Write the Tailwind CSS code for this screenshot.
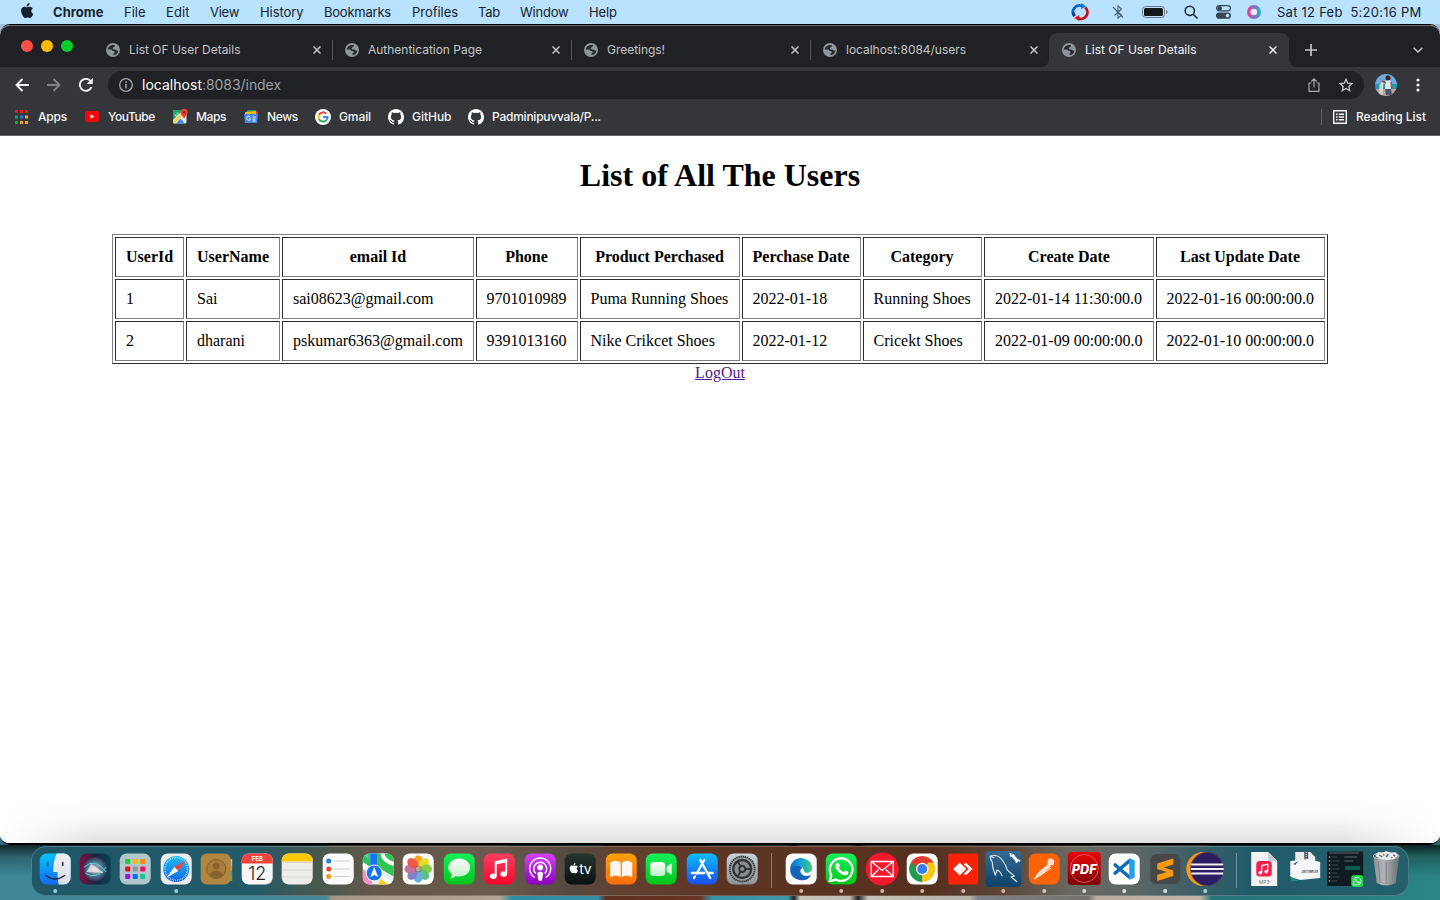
<!DOCTYPE html>
<html lang="en">
<head>
<meta charset="utf-8">
<title>List OF User Details</title>
<script src="https://cdn.jsdelivr.net/npm/@tailwindcss/browser@4"></script>
</head>
<body class="w-[1440px] h-[900px] overflow-hidden relative font-['Inter',sans-serif] bg-[linear-gradient(90deg,#3d8799_0,#46889a_326px,#a39784_332px,#b3a58f_500px,#2f8ea3_512px,#338fa3_598px,#5c2f20_606px,#6a3423_700px,#3493a5_712px,#3f98a6_788px,#222_794px,#c9c5bb_800px,#bdb9b0_850px,#222_858px,#c5c0b5_868px,#b5b0a8_970px,#7e8288_978px,#75716b_1088px,#b8aa9c_1096px,#c3b3a3_1200px,#257477_1212px,#2b8584_1440px)]">
<svg class="absolute w-0 h-0">
  <defs>
    <symbol id="globe" viewBox="0 0 14 14"><circle cx="7" cy="7" r="7" fill="#8e959c"/><path d="M5.600 2.300C3.500 2.900 2 4.500 1.700 6.600h3.100c.9 0 1.400.6 1.400 1.400h1.300c.7 0 1.200.5 1.200 1.200 0 .6-.5 1-1.200 1v1.900c2.700-.2 4.700-2.200 4.900-4.700-.8.400-1.700.3-2.300-.3-.5-.5-1-.6-1.700-.6-.9 0-1.600-.5-1.600-1.300 0-.7.600-1.100 1.300-1.200.5-.1.700-.4.700-.9 0-.4.100-.7.300-1-1.200-.3-2.400-.2-3.500.2z" fill="#26282b"/></symbol>
    <symbol id="close" viewBox="0 0 8 8"><path d="M.5.5l7 7M7.500.5l-7 7" stroke="currentColor" stroke-width="1.500" fill="none"/></symbol>
    <symbol id="github" viewBox="0 0 16 16"><path fill="#fff" d="M8 0C3.580 0 0 3.580 0 8c0 3.540 2.290 6.530 5.470 7.590.4.070.55-.17.55-.38 0-.19-.01-.82-.01-1.490-2.010.37-2.530-.49-2.690-.94-.09-.23-.48-.94-.82-1.130-.28-.15-.68-.52-.01-.53.63-.01 1.080.58 1.230.82.72 1.210 1.870.87 2.330.66.070-.52.28-.87.51-1.070-1.780-.2-3.640-.89-3.640-3.950 0-.87.31-1.590.82-2.150-.08-.2-.36-1.020.08-2.120 0 0 .67-.21 2.200.82a7.600 7.600 0 0 1 4 0c1.530-1.040 2.200-.82 2.200-.82.44 1.100.16 1.920.08 2.120.51.56.82 1.270.82 2.150 0 3.070-1.870 3.750-3.650 3.950.29.25.54.73.54 1.480 0 1.070-.01 1.930-.01 2.200 0 .21.15.46.55.38A8 8 0 0 0 16 8c0-4.420-3.580-8-8-8z"/></symbol>
    <symbol id="apple" viewBox="0 0 14 17"><path d="M9.700 0c.1 1.100-.3 2-.9 2.700-.6.700-1.500 1.200-2.300 1.100-.1-1 .3-2 .9-2.600C8 .5 8.900.1 9.700 0zM13.300 5.800c-1 .6-1.700 1.500-1.700 2.800 0 1.500.9 2.600 2.100 3.100-.3.900-.7 1.700-1.300 2.500-.6.900-1.200 1.800-2.200 1.800s-1.300-.6-2.500-.6-1.600.6-2.500.6c-1 0-1.700-1-2.300-1.900C1.200 11.700.3 8.900.8 6.800 1.300 5 2.700 4 4.200 4c1 0 2 .7 2.700.7.600 0 1.800-.8 3.100-.7 1.300.1 2.500.6 3.300 1.800z" fill="currentColor"/></symbol>
    <symbol id="wa" viewBox="-10 -10 20 20"><path d="M-9 9.500l1.400-4.600A8.700 8.700 0 1 1-4.300 8.100z" fill="none" stroke="#fff" stroke-width="1.800" stroke-linejoin="round"/><path d="M-3.400-4.500c.8-.7 1.400-.4 1.700.3l.7 1.600c.2.600-.9 1.300-.7 1.700.8 1.600 1.900 2.600 3.500 3.200.5.100 1-1.300 1.600-1.200l2 1c.7.500-.3 2.400-1.500 2.700C.6 5.600-4.500.7-4.700-2.100c0-1 .7-1.900 1.300-2.400z" fill="#fff"/></symbol>
    <linearGradient id="gFinder" x2="0" y2="1"><stop stop-color="#08c4fb"/><stop offset="1" stop-color="#1768f5"/></linearGradient>
    <linearGradient id="gWhite" x2="0" y2="1"><stop stop-color="#f0f1f4"/><stop offset="1" stop-color="#d8dde8"/></linearGradient>
    <linearGradient id="gSiri"><stop stop-color="#7d1140"/><stop offset=".5" stop-color="#1d2344"/><stop offset="1" stop-color="#064451"/></linearGradient>
    <radialGradient id="gOrb"><stop stop-color="#fff"/><stop offset=".35" stop-color="#b3b7d2"/><stop offset=".7" stop-color="#42899a"/><stop offset="1" stop-color="#4b315e"/></radialGradient>
    <linearGradient id="gSafari" x2="0" y2="1"><stop stop-color="#17bdf9"/><stop offset="1" stop-color="#1766e8"/></linearGradient>
    <linearGradient id="gMsg" x2="0" y2="1"><stop stop-color="#12f25a"/><stop offset="1" stop-color="#04c41b"/></linearGradient>
    <linearGradient id="gBubble" x2="0" y2="1"><stop stop-color="#fbfdfb"/><stop offset="1" stop-color="#c4edc9"/></linearGradient>
    <linearGradient id="gMusic" x2="0" y2="1"><stop stop-color="#fd3e63"/><stop offset="1" stop-color="#f6062a"/></linearGradient>
    <linearGradient id="gPod" x2="0" y2="1"><stop stop-color="#d442f8"/><stop offset="1" stop-color="#8a02be"/></linearGradient>
    <linearGradient id="gTv" x2="0" y2="1"><stop stop-color="#24352f"/><stop offset="1" stop-color="#0a1012"/></linearGradient>
    <linearGradient id="gBook" x2="0" y2="1"><stop stop-color="#ffa007"/><stop offset="1" stop-color="#fd6f08"/></linearGradient>
    <linearGradient id="gStore" x2="0" y2="1"><stop stop-color="#08bdfb"/><stop offset="1" stop-color="#1a4ef0"/></linearGradient>
    <linearGradient id="gSet" x2="0" y2="1"><stop stop-color="#c8d3da"/><stop offset="1" stop-color="#8e9396"/></linearGradient>
    <linearGradient id="gSql" x2="0" y2="1"><stop stop-color="#356b93"/><stop offset="1" stop-color="#0d4168"/></linearGradient>
    <linearGradient id="gPdf" x2="0" y2="1"><stop stop-color="#e8060c"/><stop offset="1" stop-color="#7c0407"/></linearGradient>
    <linearGradient id="gTrash"><stop stop-color="#8b8f91"/><stop offset=".4" stop-color="#b2b5b6"/><stop offset="1" stop-color="#6a6f72"/></linearGradient>
    <linearGradient id="gEdge"><stop stop-color="#0d69c0"/><stop offset=".5" stop-color="#14a5d9"/><stop offset="1" stop-color="#43ce6a"/></linearGradient>
    <linearGradient id="gCtl"><stop stop-color="#f43c86"/><stop offset=".5" stop-color="#8c6ad0"/><stop offset="1" stop-color="#18bfc4"/></linearGradient>
  </defs>
</svg>

<div class="flex flex-col h-[900px]">
  <!-- Menu bar -->
  <header class="h-6 shrink-0 flex items-center bg-[#b8e2ff] text-[#14222c] text-[13px] leading-6 whitespace-nowrap">
    <svg class="w-[14px] h-[16px] ml-[20px] mr-[19px] shrink-0 -mt-[2px]"><use href="#apple"/></svg>
    <div class="w-[71px] font-bold"><span data-w="50.500">Chrome</span></div>
    <div class="w-[42px]"><span data-w="21.500">File</span></div>
    <div class="w-[44px]"><span data-w="23.500">Edit</span></div>
    <div class="w-[50px]"><span data-w="29">View</span></div>
    <div class="w-[64px]"><span data-w="43.500">History</span></div>
    <div class="w-[88px]"><span data-w="67">Bookmarks</span></div>
    <div class="w-[66px]"><span data-w="46">Profiles</span></div>
    <div class="w-[42px]"><span data-w="22">Tab</span></div>
    <div class="w-[69px]"><span data-w="48.500">Window</span></div>
    <div class="flex-1"><span data-w="28">Help</span></div>
    <svg class="w-[18px] h-[18px] mr-[23px]" viewBox="0 0 18 18" fill="none" stroke-width="2.800"><path d="M3.200 13A6.600 6.600 0 0 1 11 3" stroke="#0b63c4"/><path d="M2.500 9.500A6.600 6.600 0 0 0 3.600 13.300" stroke="#173a75"/><path d="M10.500 0l4.500 3.400-5 2.600z" fill="#0b72d8"/><path d="M14.300 4.500A6.600 6.600 0 0 1 7 15.300" stroke="#c61218"/><path d="M8.300 12l-5 3 5 3z" fill="#e80b12"/></svg>
    <svg class="w-[12px] h-[14px] mr-[18px]" viewBox="0 0 12 14" fill="none" stroke="#4b6272" stroke-width="1.100"><path d="M2.500 10.500L9.500 4 6 .8v12.400L9.500 10 6.500 7.300M1 2l10 10.500"/></svg>
    <svg class="w-[26px] h-[12px] mr-[16px]" viewBox="0 0 26 12"><rect x=".5" y=".5" width="22" height="11" rx="3" fill="none" stroke="#627a8a"/><rect x="2" y="2" width="19" height="8" rx="1.500" fill="#14181b"/><path d="M24 4c2 .5 2 3.500 0 4z" fill="#627a8a"/></svg>
    <svg class="w-[14px] h-[14px] mr-[18px]" viewBox="0 0 14 14" fill="none" stroke="#15222b" stroke-width="1.500"><circle cx="5.800" cy="5.800" r="4.600"/><path d="M9 9l4.500 4.500"/></svg>
    <svg class="w-[15px] h-[14px] mr-[16px]" viewBox="0 0 15 14"><rect x=".6" y=".6" width="13.800" height="5.200" rx="2.600" fill="none" stroke="#36454f" stroke-width="1.200"/><circle cx="3.700" cy="3.200" r="2.300" fill="#36454f"/><rect y="7.500" width="15" height="6.300" rx="3.100" fill="#36454f"/><circle cx="11.500" cy="10.600" r="1.800" fill="#b8e2ff"/></svg>
    <svg class="w-[14px] h-[14px] mr-[16px]" viewBox="0 0 14 14"><circle cx="7" cy="7" r="7" fill="url(#gCtl)"/><circle cx="6.800" cy="7" r="3.300" fill="#fff" opacity=".85"/></svg>
    <div class="w-[163px] whitespace-pre"><span data-w="144.500">Sat 12 Feb  5:20:16 PM</span></div>
  </header>

  <!-- Browser window -->
  <div class="shrink-0 bg-[linear-gradient(180deg,#9fc4dc_0,#9fc4dc_12px,#0000_12px,#0000_780px,#0003_100%)]">
  <main class="h-[821px] flex flex-col bg-white border-t border-b-2 border-black rounded-[10px] overflow-hidden">
    <div class="h-[42px] shrink-0 flex bg-[#202124] border-t border-[#66686b] rounded-t-[10px] text-[12px] text-[#c3c6ca] whitespace-nowrap">
      <div class="w-[94px] flex gap-2 pl-[21px] pt-[14px]">
        <span class="w-3 h-3 rounded-full bg-[#ff4f48]"></span><span class="w-3 h-3 rounded-full bg-[#febb00]"></span><span class="w-3 h-3 rounded-full bg-[#05ce2c]"></span>
      </div>
      <div class="w-[239px] h-[34px] mt-[7px] flex items-center pl-3"><svg class="w-[14px] h-[14px] mr-[9px]"><use href="#globe"/></svg><span class="flex-1"><span data-w="111.500">List OF User Details</span></span><svg class="w-2 h-2 mr-[11px]"><use href="#close"/></svg><i class="w-px h-5 bg-[#54565a]"></i></div>
      <div class="w-[239px] h-[34px] mt-[7px] flex items-center pl-3"><svg class="w-[14px] h-[14px] mr-[9px]"><use href="#globe"/></svg><span class="flex-1"><span data-w="114">Authentication Page</span></span><svg class="w-2 h-2 mr-[11px]"><use href="#close"/></svg><i class="w-px h-5 bg-[#54565a]"></i></div>
      <div class="w-[239px] h-[34px] mt-[7px] flex items-center pl-3"><svg class="w-[14px] h-[14px] mr-[9px]"><use href="#globe"/></svg><span class="flex-1"><span data-w="58">Greetings!</span></span><svg class="w-2 h-2 mr-[11px]"><use href="#close"/></svg><i class="w-px h-5 bg-[#54565a]"></i></div>
      <div class="w-[230px] h-[34px] mt-[7px] flex items-center pl-3"><svg class="w-[14px] h-[14px] mr-[9px]"><use href="#globe"/></svg><span class="flex-1"><span data-w="120">localhost:8084/users</span></span><svg class="w-2 h-2 mr-[3px]"><use href="#close"/></svg></div>
      <svg class="w-2 h-[34px] mt-[7px]" viewBox="0 0 8 34"><path d="M8 26v8H0a8 8 0 0 0 8-8z" fill="#35363a"/></svg>
      <div class="w-[240px] h-[34px] mt-[7px] flex items-center pl-[13px] bg-[#35363a] text-[#f1f3f4] rounded-t-lg"><svg class="w-[14px] h-[14px] mr-[9px]"><use href="#globe"/></svg><span class="flex-1"><span data-w="111.500">List OF User Details</span></span><svg class="w-2 h-2 mr-[12px]"><use href="#close"/></svg></div>
      <svg class="w-2 h-[34px] mt-[7px]" viewBox="0 0 8 34"><path d="M0 26v8h8a8 8 0 0 1-8-8z" fill="#35363a"/></svg>
      <svg class="w-3 h-3 mt-[18px] ml-2" viewBox="0 0 12 12"><path d="M6 0v12M0 6h12" stroke="#c3c6ca" stroke-width="1.700"/></svg>
      <svg class="w-[10px] h-[6px] mt-[21px] ml-auto mr-[17px]" viewBox="0 0 10 6"><path d="M.7.7L5 5 9.300.7" fill="none" stroke="#c3c6ca" stroke-width="1.500"/></svg>
    </div>
    <!-- Address bar -->
    <div class="h-[36px] shrink-0 flex items-center bg-[#35363a]">
      <svg class="w-[14px] h-[14px] ml-[15px] mr-[18px]" viewBox="0 0 14 14" fill="none" stroke="#f1f3f4" stroke-width="1.900"><path d="M14 7H1.500M7.500 1L1.500 7l6 6"/></svg>
      <svg class="w-[14px] h-[14px] mr-[18px]" viewBox="0 0 14 14" fill="none" stroke="#808286" stroke-width="1.800"><path d="M0 7h12.500M6.500 1l6 6-6 6"/></svg>
      <svg class="w-[14px] h-[14px] mr-[15px]" viewBox="0 0 14 14"><path d="M12.500 9A6 6 0 1 1 11.500 3" fill="none" stroke="#f1f3f4" stroke-width="1.900"/><path d="M13.800 0v6H7.800z" fill="#f1f3f4"/></svg>
      <div class="w-[1256px] h-7 rounded-full bg-[#202124] flex items-center text-[14px] text-[#9aa0a6]">
        <svg class="w-[14px] h-[14px] ml-[11px] mr-[9px]" viewBox="0 0 14 14"><circle cx="7" cy="7" r="6.300" fill="none" stroke="#a4a8ad" stroke-width="1.300"/><path d="M7 6v4.500M7 3.300v1.500" stroke="#a4a8ad" stroke-width="1.500"/></svg>
        <span class="flex-1 pb-px leading-[18px]"><span class="text-white" data-w="60">localhost</span><span data-w="79">:8083/index</span></span>
        <svg class="w-[12px] h-[14px] mr-[19px]" viewBox="0 0 12 14" fill="none" stroke="#a4a8ad" stroke-width="1.200"><path d="M3.500 5H1v8.300h10V5H8.500M6 9.500V1M3.300 3.500L6 .9l2.700 2.600"/></svg>
        <svg class="w-[14px] h-[14px] mr-[11px]" viewBox="0 0 14 14" fill="none" stroke="#c3c6ca" stroke-width="1.300"><path d="M7 1.300l1.700 3.900 4.300.4-3.200 2.900.9 4.200L7 10.500l-3.700 2.200.9-4.200L1 5.600l4.300-.4z"/></svg>
      </div>
      <svg class="w-[22px] h-[22px] ml-[11px]" viewBox="0 0 22 22"><clipPath id="av"><circle cx="11" cy="11" r="11"/></clipPath><g clip-path="url(#av)"><path fill="#70a9e0" d="M0 0h22v11H0z"/><path fill="#1e9ab4" d="M0 10h22v6H0z"/><path fill="#b1a79a" d="M0 15h22v7H0z"/><path d="M4 22L4.500 11l3-4 1 2-1 12z" fill="#d6d2cc"/><path d="M10 8l2-2h3l2 4-1 6h-6z" fill="#e2e5ea"/><circle cx="13" cy="4" r="2.500" fill="#39241f"/><path d="M7 7l4 2M16 8l1 7" stroke="#8a5a43" stroke-width="1.600"/><path d="M10 15h6l1 6h-6z" fill="#4c5170"/></g></svg>
      <svg class="w-[4px] h-[14px] ml-[19px]" viewBox="0 0 4 14" fill="#f1f3f4"><circle cx="2" cy="2" r="1.600"/><circle cx="2" cy="7" r="1.600"/><circle cx="2" cy="12" r="1.600"/></svg>
    </div>
    <!-- Bookmarks -->
    <div class="h-[33px] pb-[5px] shrink-0 flex items-center bg-[#35363a] border-b border-[#626366] text-[12px] text-[#f5f6f7] whitespace-nowrap font-medium">
      <svg class="w-[13px] h-[14px] ml-[15px] mr-[10px]" viewBox="0 0 13 14"><path fill="#ea1c1c" d="M0 0h3v3H0zM5 0h3v3H5zM10 0h3v3h-3z"/><path fill="#18a34a" d="M0 5.500h3v3H0zM0 11h3v3H0z"/><path fill="#1c7be8" d="M5 5.500h3v3H5z"/><path fill="#f7a81b" d="M10 5.500h3v3h-3zM5 11h3v3H5zM10 11h3v3h-3z"/></svg>
      <div class="w-[47px]"><span data-w="29">Apps</span></div>
      <svg class="w-[14px] h-[11px] mr-[9px]" viewBox="0 0 14 11"><rect width="14" height="11" rx="2.500" fill="#f00"/><path d="M5.500 3.200v4.600l4-2.300z" fill="#fff"/></svg>
      <div class="w-[65px]"><span data-w="47">YouTube</span></div>
      <svg class="w-[15px] h-[15px] mr-[8px]" viewBox="0 0 15 15"><rect y="1" width="13.500" height="13.500" rx="1.500" fill="#e8eaed"/><path fill="#1da462" d="M1 1h9L0 11V2z"/><path fill="#fbd04b" d="M0 12l9-9 2 2-9 9.500H1z"/><path d="M3 14.500L7.500 9.600l4.500 4.900z" fill="#4285f4"/><path d="M7.500 3.500a3.600 3.600 0 0 1 7.200 0c0 2.500-2.700 3.300-3.600 6.500-.9-3.200-3.600-4-3.600-6.500z" fill="#ea4335"/><circle cx="11.100" cy="3.500" r="1.300" fill="#8c1b12"/><path d="M2 5.500a1.600 1.600 0 1 0 1.600-1.600" stroke="#fff" stroke-width=".9" fill="none"/></svg>
      <div class="w-[48px]"><span data-w="30">Maps</span></div>
      <svg class="w-[15px] h-[13px] mr-[8px]" viewBox="0 0 15 13"><path fill="#1a9b55" d="M3 0h9v4H3z"/><path fill="#ea4335" d="M10 1l4 1-1 3h-3z"/><path fill="#fbbc04" d="M1 2l11-1v4H1z"/><path fill="#4285f4" d="M0 4h14l-1 9H1z"/><path d="M6.300 7.200A2 2 0 1 0 6.500 9H5M8.500 7h3M8.500 9h3M8.500 11h3" fill="none" stroke="#fff" stroke-width="1"/></svg>
      <div class="w-[48px]"><span data-w="31">News</span></div>
      <svg class="w-4 h-4 mr-[8px]" viewBox="0 0 16 16" fill="none" stroke-width="2"><circle cx="8" cy="8" r="8" fill="#fff"/><path d="M11.300 4.700A4.600 4.600 0 0 0 4 5.800" stroke="#ea4335"/><path d="M4 5.700a4.600 4.600 0 0 0 0 4.600" stroke="#fbbc04"/><path d="M4 10.300a4.600 4.600 0 0 0 7 1.100" stroke="#34a853"/><path d="M11 11.400A4.600 4.600 0 0 0 12.600 8H8" stroke="#4285f4"/></svg>
      <div class="w-[49px]"><span data-w="32">Gmail</span></div>
      <svg class="w-4 h-4 mr-[8px]"><use href="#github"/></svg>
      <div class="w-[56px]"><span data-w="39.500">GitHub</span></div>
      <svg class="w-4 h-4 mr-[8px]"><use href="#github"/></svg>
      <div class="flex-1"><span data-w="109">Padminipuvvala/P...</span></div>
      <i class="w-px h-4 bg-[#5f6165] mr-[11px]"></i>
      <svg class="w-[14px] h-[14px] mr-[9px]" viewBox="0 0 14 14" fill="none" stroke="#f1f3f4" stroke-width="1.400"><path d="M.7.7h12.600v12.600H.7zM3 4.200h1.600M3 7h1.600M3 9.800h1.600M5.700 4.200H11M5.700 7H11M5.700 9.800H11"/></svg>
      <div class="w-[84px]"><span data-w="70">Reading List</span></div>
    </div>
    <!-- Page -->
    <section class="flex-1 flex flex-col items-center text-black text-[16px] font-['Liberation_Serif',serif] bg-[linear-gradient(90deg,#fff_0,#fff0_100px,#fff0_1340px,#fff_1440px),linear-gradient(180deg,#fff_0,#fff_660px,#f9f9f9_680px,#eee_694px,#e0e0e0_707px)]">
      <h1 class="text-[32px] leading-[37px] font-bold mt-[21px] mb-[40px]">List of All The Users</h1>
      <table class="w-[1216px] h-[130px] table-fixed border-separate border-spacing-[2px] border border-t-[#808080] border-l-[#808080] border-b-[#2c2c2c] border-r-[#2c2c2c] leading-[18px] whitespace-nowrap [&_:is(td,th)]:h-10 [&_:is(td,th)]:px-[10px] [&_:is(td,th)]:py-0 [&_:is(td,th)]:border [&_:is(td,th)]:border-t-[#2c2c2c] [&_:is(td,th)]:border-l-[#2c2c2c] [&_:is(td,th)]:border-b-[#808080] [&_:is(td,th)]:border-r-[#808080] [&_:is(td,th):nth-child(n+4):not(:nth-child(8))]:pl-[9.500px] [&_:is(td,th):nth-child(n+4):not(:nth-child(8))]:pr-[10.500px]">
        <colgroup><col class="w-[69px]"><col class="w-[94px]"><col class="w-[192px]"><col class="w-[102px]"><col class="w-[160px]"><col class="w-[119px]"><col class="w-[119px]"><col class="w-[170px]"><col class="w-[169px]"></colgroup>
        <tr><th>UserId</th><th>UserName</th><th>email Id</th><th>Phone</th><th>Product Perchased</th><th>Perchase Date</th><th>Category</th><th>Create Date</th><th>Last Update Date</th></tr>
        <tr><td>1</td><td>Sai</td><td>sai08623@gmail.com</td><td>9701010989</td><td>Puma Running Shoes</td><td>2022-01-18</td><td>Running Shoes</td><td>2022-01-14 11:30:00.0</td><td>2022-01-16 00:00:00.0</td></tr>
        <tr><td>2</td><td>dharani</td><td>pskumar6363@gmail.com</td><td>9391013160</td><td>Nike Crikcet Shoes</td><td>2022-01-12</td><td>Cricekt Shoes</td><td>2022-01-09 00:00:00.0</td><td>2022-01-10 00:00:00.0</td></tr>
      </table>
      <a class="text-[#551a8b] underline leading-[18px]">LogOut</a>
    </section>
  </main>
  </div>

  <!-- Desktop and dock -->
  <footer class="flex-1 px-[31px] pt-px bg-[linear-gradient(180deg,#000b_0,#0004_12px,#0000_32px)]">
    <div class="h-[50px] rounded-[15px] border border-white/20 flex items-start pl-[2.500px] bg-[linear-gradient(90deg,#1f5767_0,#225a68_220px,#48584f_285px,#625749_340px,#6a5b4c_460px,#54493f_540px,#63402f_590px,#5c3424_700px,#56301f_900px,#5b4536_970px,#6a6861_1040px,#5f6765_1100px,#3b5f67_1165px,#215a69_1220px,#24606c_1376px)] [&>svg]:w-[40.450px] [&>svg]:h-[48px] [&>svg]:shrink-0">
      <!-- Finder -->
      <svg viewBox="-20 -22 40 48"><rect x="-15.500" y="-15.500" width="31" height="31" rx="7" fill="url(#gFinder)"/><path d="M1.500-15.500h7a7 7 0 0 1 7 7V8.500a7 7 0 0 1-7 7H3.500Q2 9 2.300 3H-2Q-2-8 1.500-15.500z" fill="url(#gWhite)"/><path d="M-7.500-6.500v3M7.500-6.500v3M-9.500 6.500q9.500 7 19 0" stroke="#14233a" stroke-width="1.400" fill="none" stroke-linecap="round"/><circle cy="22" r="2" fill="#8ccfe3"/></svg>
      <!-- Siri -->
      <svg viewBox="-20 -22 40 48"><rect x="-15.500" y="-15.500" width="31" height="31" rx="7" fill="url(#gSiri)"/><circle r="12" fill="url(#gOrb)" opacity=".7"/><path d="M-11-2Q0-12 11 3M-10 4Q0 12 11-2" stroke="#51d8cf" fill="none"/><path d="M-4-5L9 4-9 3z" fill="#fff" opacity=".65"/></svg>
      <!-- Launchpad -->
      <svg viewBox="-20 -22 40 48"><rect x="-15.500" y="-15.500" width="31" height="31" rx="7" fill="#b2c6ce"/><g><rect x="-10" y="-10" width="5" height="5" rx="1" fill="#16cf3b"/><rect x="-2.500" y="-10" width="5" height="5" rx="1" fill="#f9b808"/><rect x="5" y="-10" width="5" height="5" rx="1" fill="#fb8b08"/><rect x="-10" y="-2.500" width="5" height="5" rx="1" fill="#e80b18"/><rect x="-2.500" y="-2.500" width="5" height="5" rx="1" fill="#8c9699"/><rect x="5" y="-2.500" width="5" height="5" rx="1" fill="#f90c58"/><rect x="-10" y="5" width="5" height="5" rx="1" fill="#9816d6"/><rect x="-2.500" y="5" width="5" height="5" rx="1" fill="#0b6cf4"/><rect x="5" y="5" width="5" height="5" rx="1" fill="#0bcc87"/></g></svg>
      <!-- Safari -->
      <svg viewBox="-20 -22 40 48"><rect x="-15.500" y="-15.500" width="31" height="31" rx="7" fill="#ecedef"/><circle r="13" fill="url(#gSafari)"/><circle r="11.300" fill="none" stroke="#fff" stroke-width="1.500" stroke-dasharray=".6 1.200"/><path d="M9.500-8.500L2 2-2-2z" fill="#f4433a"/><path d="M-9.500 8.500L-2-2 2 2z" fill="#fff"/><circle cy="22" r="2" fill="#8ccfe3"/></svg>
      <!-- Contacts -->
      <svg viewBox="-20 -22 40 48"><path d="M12-10h4v7h-4z" fill="#b7b8b5"/><path d="M12-3h4v5h-4z" fill="#eb9426"/><path d="M12 2h4v5h-4z" fill="#2ba1ae"/><path d="M12 7h4v5h-4z" fill="#54b63b"/><rect x="-15.500" y="-15.500" width="30" height="31" rx="6" fill="#b28640"/><circle r="9.500" fill="#a97d38" stroke="#83602a"/><circle cy="-3" r="3.300" fill="#86622e"/><path d="M-7 6Q-4 1.500 0 1.500T7 6Q0 12-7 6z" fill="#86622e"/></svg>
      <!-- Calendar -->
      <svg viewBox="-20 -22 40 48"><rect x="-15.500" y="-15.500" width="31" height="31" rx="7" fill="#f7f7f7"/><path d="M-15.500-5.500v-3a7 7 0 0 1 7-7h17a7 7 0 0 1 7 7v3z" fill="#f3443e"/><text y="-8" text-anchor="middle" font-size="6" font-weight="700" fill="#fff">FEB</text><text y="10.500" text-anchor="middle" font-size="19" font-weight="300" fill="#252525" textLength="18" lengthAdjust="spacingAndGlyphs">12</text></svg>
      <!-- Notes -->
      <svg viewBox="-20 -22 40 48"><rect x="-15.500" y="-15.500" width="31" height="31" rx="7" fill="#efedea"/><path d="M-15.500-7.500v-1a7 7 0 0 1 7-7h17a7 7 0 0 1 7 7v1z" fill="#fdc904"/><path d="M-15.500-6.500h31M-15.500 1h31M-15.500 8h31" stroke="#d2d0cc" stroke-width=".7"/></svg>
      <!-- Reminders -->
      <svg viewBox="-20 -22 40 48"><rect x="-15.500" y="-15.500" width="31" height="31" rx="7" fill="#fbfbfb"/><path d="M-4-8h16M-4 0h16M-4 7.500h16" stroke="#cfcfcf"/><circle cx="-9.500" cy="-8" r="2.500" fill="#2479ec"/><circle cx="-9.500" r="2.500" fill="#ec4438"/><circle cx="-9.500" cy="7.500" r="2.500" fill="#f49422"/></svg>
      <!-- Maps -->
      <svg viewBox="-20 -22 40 48"><clipPath id="mp"><rect x="-15.500" y="-15.500" width="31" height="31" rx="7"/></clipPath><g clip-path="url(#mp)"><path fill="#e9eef0" d="M-16-16h32v32h-32z"/><path fill="#2fc550" d="M-16-16h8V0l-8-5zM-1-16h17V8L-1-2z"/><path fill="#44cdf1" d="M-16-16h6v6z"/><path d="M-16-5L16 17M16-5Q4-8 4-18" stroke="#fff" stroke-width="4" fill="none"/><path fill="#f291c3" d="M-16 0l10 6v10h-10z"/><path fill="#fcce1b" d="M2 10l9 6H0z"/><path fill="#1475f4" d="M-8-16h7V0h-7z"/><circle cx="-4" cy="4" r="8" fill="#1475f4" stroke="#fff"/><path d="M-4-2L0 8l-4-2-4 2z" fill="#fff"/></g></svg>
      <!-- Photos -->
      <svg viewBox="-20 -22 40 48"><rect x="-15.500" y="-15.500" width="31" height="31" rx="7" fill="#fff"/><g opacity=".92"><ellipse cy="-8" rx="4.600" ry="5.800" fill="#fb9812"/><ellipse cy="-8" rx="4.600" ry="5.800" fill="#e6d81c" transform="rotate(45)"/><ellipse cy="-8" rx="4.600" ry="5.800" fill="#82c932" transform="rotate(90)"/><ellipse cy="-8" rx="4.600" ry="5.800" fill="#4dbb72" transform="rotate(135)"/><ellipse cy="-8" rx="4.600" ry="5.800" fill="#5ca8dc" transform="rotate(180)"/><ellipse cy="-8" rx="4.600" ry="5.800" fill="#7b78c6" transform="rotate(225)"/><ellipse cy="-8" rx="4.600" ry="5.800" fill="#c0669d" transform="rotate(270)"/><ellipse cy="-8" rx="4.600" ry="5.800" fill="#f0483c" transform="rotate(315)"/></g><circle r="3.500" fill="#6e5a3c" opacity=".5"/></svg>
      <!-- Messages -->
      <svg viewBox="-20 -22 40 48"><rect x="-15.500" y="-15.500" width="31" height="31" rx="7" fill="url(#gMsg)"/><path d="M0-10.500c6 0 11 4 11 9s-5 9-11 9q-2 0-3.500-.5Q-6 9.500-9 9.500q2-2 1.800-4.300Q-11 2.500-11-1.500c0-5 5-9 11-9z" fill="url(#gBubble)"/></svg>
      <!-- Music -->
      <svg viewBox="-20 -22 40 48"><rect x="-15.500" y="-15.500" width="31" height="31" rx="7" fill="url(#gMusic)"/><path d="M-3.500 7v-14L7-9.300V4.500M-3.500-5.500L7-7.800" stroke="#fff" stroke-width="2" fill="none"/><ellipse cx="-6" cy="7.300" rx="3.300" ry="2.700" fill="#fff"/><ellipse cx="4.500" cy="5" rx="3.300" ry="2.700" fill="#fff"/></svg>
      <!-- Podcasts -->
      <svg viewBox="-20 -22 40 48"><rect x="-15.500" y="-15.500" width="31" height="31" rx="7" fill="url(#gPod)"/><g fill="none" stroke="#fff" stroke-width="1.400"><path d="M-5.500 8.500a10.500 10.500 0 1 1 11 0M-4.500 4.500a6.500 6.500 0 1 1 9 0"/></g><circle cy="-1.500" r="2.900" fill="#fff"/><path d="M-3 4q3-2.500 6 0L1.800 11q-1.800 2-3.600 0z" fill="#fff"/></svg>
      <!-- TV -->
      <svg viewBox="-20 -22 40 48"><rect x="-15.500" y="-15.500" width="31" height="31" rx="7" fill="url(#gTv)"/><use href="#apple" x="-11" y="-6" width="9" height="11" color="#fff"/><text x="-1" y="4.700" font-size="14" fill="#fff" textLength="12.500">tv</text></svg>
      <!-- Books -->
      <svg viewBox="-20 -22 40 48"><rect x="-15.500" y="-15.500" width="31" height="31" rx="7" fill="url(#gBook)"/><path d="M-.6 8Q-5 5-11 8V-6.500Q-5-10-.6-6.500zM.6 8Q5 5 11 8V-6.500Q5-10 .6-6.500z" fill="#fcf7f1"/></svg>
      <!-- FaceTime -->
      <svg viewBox="-20 -22 40 48"><rect x="-15.500" y="-15.500" width="31" height="31" rx="7" fill="url(#gMsg)"/><rect x="-11" y="-7" width="15" height="14" rx="3.500" fill="url(#gBubble)"/><path d="M5.500-2.500L10.500-6V6L5.500 2.500z" fill="#e3f6e5"/></svg>
      <!-- App Store -->
      <svg viewBox="-20 -22 40 48"><rect x="-15.500" y="-15.500" width="31" height="31" rx="7" fill="url(#gStore)"/><path d="M2-9L-5.500 4.500M-2-9L8 9M-10.500 4H2M6.500 4H10.500M-7.300 7.500L-8.200 9" stroke="#fff" stroke-width="2.300" stroke-linecap="round"/></svg>
      <!-- Settings -->
      <svg viewBox="-20 -22 40 48"><rect x="-15.500" y="-15.500" width="31" height="31" rx="7" fill="url(#gSet)"/><circle r="12.500" fill="#9a9da0" stroke="#33373a" stroke-width="1.800" stroke-dasharray="1.500 .6"/><circle r="9" fill="#8a8e91" stroke="#303437" stroke-width="2.300"/><circle r="3" fill="none" stroke="#303437" stroke-width="1.800"/><path d="M3 0h6M-1.500-2.500L-5-8M-1.500 2.500L-5 8" stroke="#303437" stroke-width="1.800"/></svg>
      <div class="w-[18.500px] flex justify-center pt-[6px] shrink-0"><i class="w-px h-[35px] bg-white/35"></i></div>
      <!-- Edge -->
      <svg viewBox="-20 -22 40 48"><rect x="-15.500" y="-15.500" width="31" height="31" rx="7" fill="#fff"/><path d="M-11 1A11 11 0 0 1 11-1c0 4-3 5.500-7 4.500C2 3 3-1 0-2.500-4-4-8-3-11 1z" fill="url(#gEdge)"/><path d="M-11 1C-8-5 0-4 1-1-2 0-2 7 6 7c2 0 3.500-1 4-1C7 11 2 12-2 11-8 9.500-11 6-11 1z" fill="#1164b8"/><circle cy="22" r="2" fill="#d4b5a6"/></svg>
      <!-- WhatsApp -->
      <svg viewBox="-20 -22 40 48"><rect x="-15.500" y="-15.500" width="31" height="31" rx="7" fill="url(#gMsg)"/><use href="#wa" x="-13" y="-13" width="26" height="26"/><circle cy="22" r="2" fill="#d4b5a6"/></svg>
      <!-- Mail client -->
      <svg viewBox="-20 -22 40 48"><circle r="16.500" fill="#f9182b"/><path d="M-11-7.500h22v15h-22zM-11-7.500L0 1.500 11-7.500M-11 7.500l7.500-7M11 7.500l-7.500-7" fill="none" stroke="#fff" stroke-width="1.300"/><circle cy="22" r="2" fill="#d4b5a6"/></svg>
      <!-- Chrome -->
      <svg viewBox="-20 -22 40 48"><rect x="-15.500" y="-15.500" width="31" height="31" rx="7" fill="#fff"/><path d="M0 0L-11.260-6.500A13 13 0 0 1 11.260-6.500z" fill="#e33b2e"/><path d="M0 0L11.260-6.500A13 13 0 0 1 0 13z" fill="#fcc712"/><path d="M0 0V13A13 13 0 0 1-11.260-6.500z" fill="#219a4c"/><path d="M0-6.500h11.260L5 3zM-5.600 3.200L-11.260-6.500 0-3z" fill="#e33b2e"/><path d="M-11.260-6.500L-5.600 3.200-2 0z" fill="#219a4c"/><path d="M5.600-6.500h5.700L5.600 3.200 0 13z" fill="#fcc712"/><circle r="6.200" fill="#fff"/><circle r="5" fill="#3b7df0"/><circle cy="22" r="2" fill="#d4b5a6"/></svg>
      <!-- AnyDesk -->
      <svg viewBox="-20 -22 40 48"><rect x="-15" y="-15.500" width="30" height="31" rx="2" fill="#fb2208"/><path d="M-3.500-6.500L3 0l-6.500 6.500L-10 0z" fill="#fff"/><path d="M1.500-5.500L7.500 0l-6 5.500" stroke="#fff" stroke-width="2.600" fill="none"/><circle cy="22" r="2" fill="#d4b5a6"/></svg>
      <!-- MySQL Workbench -->
      <svg viewBox="-20 -22 40 48"><rect x="-18" y="-18" width="36" height="36" rx="4" fill="url(#gSql)"/><path d="M-13-13q8-2 12 4 4 5 5 10l7 6-3 1 6 5M-13-13q0 4 2 6 0 6 3 13l2-5q3 1 5 6M-13-13l4 2" fill="none" stroke="#d9e8f2" stroke-width="1.200"/><path d="M9-14l5 6" stroke="#fff" stroke-width="3"/><path d="M7-16l1 3 3-1M13-6l1-3 3 1" stroke="#fff" stroke-width="1.800" fill="none"/><circle cy="22" r="2" fill="#d4b5a6"/></svg>
      <!-- Postman -->
      <svg viewBox="-20 -22 40 48"><rect x="-15.500" y="-15.500" width="31" height="31" rx="7" fill="#fd6207"/><circle cx="6.500" cy="-7" r="3.500" fill="#fde2d2"/><path d="M4-4.500L6-2.500-4 6.500-10 10l4-6zM-6 4L5-3M-4 6.500L7-1" fill="#fbd1b6" stroke="#fff" stroke-width=".9"/><circle cy="22" r="2" fill="#d8c5b7"/></svg>
      <!-- PDF -->
      <svg viewBox="-20 -22 40 48"><rect x="-16.500" y="-17" width="33" height="33" rx="4" fill="url(#gPdf)"/><circle r="14" cy="-.5" fill="none" stroke="#f0636a" stroke-width=".8"/><text x="-12.500" y="5" font-size="12.500" font-weight="800" font-style="italic" fill="#fff" textLength="25" lengthAdjust="spacingAndGlyphs">PDF</text><circle cy="22" r="2" fill="#ddd6cc"/></svg>
      <!-- VS Code -->
      <svg viewBox="-20 -22 40 48"><rect x="-15.500" y="-15.500" width="31" height="31" rx="7" fill="#fff"/><path d="M-9-4L5 8M-9 4L5-8" stroke="#0d6bb8" stroke-width="3.600" stroke-linecap="round"/><path d="M5-11l5.500 2.500v17L5 11z" fill="#24a0f0"/><circle cy="22" r="2" fill="#e4e4df"/></svg>
      <!-- Sublime -->
      <svg viewBox="-20 -22 40 48"><rect x="-15" y="-15" width="30" height="30" rx="6" fill="#484848"/><path d="M8-10.500v6L-1.500-1.500 8 1.500v5.500L-8 12V6L1.500 3-8 0v-5.500z" fill="#fc9a10"/><circle cy="22" r="2" fill="#dce4e4"/></svg>
      <!-- Eclipse -->
      <svg viewBox="-20 -22 40 48"><circle cx="-2" r="17" fill="#f79617"/><circle cx="2" r="17" fill="#40405a"/><circle cx="2" r="16" fill="#2e1c62"/><path d="M-14-4.500h32M-14.500 0h33M-14 4.500h32" stroke="#f4f2f8" stroke-width="2"/><circle cy="22" r="2" fill="#a9d3df"/></svg>
      <div class="w-[18.500px] flex justify-center pt-[6px] shrink-0 pl-1"><i class="w-px h-[35px] bg-white/35"></i></div>
      <!-- MP3 file -->
      <svg viewBox="-20 -22 40 48"><path d="M-13-17H4l9 9v25h-26z" fill="#f3f3f4"/><path d="M4-17v9h9z" fill="#c8cbcd"/><rect x="-8" y="-8" width="15.500" height="15.500" rx="3.500" fill="#f91f49"/><path d="M-2.500 3.500v-7l6-1.300v7" fill="none" stroke="#fff" stroke-width="1.300"/><circle cx="-4" cy="3.800" r="1.800" fill="#fff"/><circle cx="2" cy="2.600" r="1.800" fill="#fff"/><text y="14.500" text-anchor="middle" font-size="5" fill="#777">MP3</text></svg>
      <!-- Archive stack -->
      <svg viewBox="-20 -22 40 48"><path d="M-10-17H5l5 5v12h-20z" fill="#e8ebed"/><path d="M-1-18h4v11h-4z" fill="#555b60"/><path d="M1-17v9" stroke="#c9cdd0" stroke-dasharray="1 1"/><path d="M-15-8l18-2 12 3v16l-20 2-10-3z" fill="#f3f5f6"/><path d="M-12-5l5-3-3 4z" fill="#264ae0"/><path d="M-15 7l8 5h-7z" fill="#1a8a83"/><text x="-4" y="3.500" font-size="3" font-weight="700" fill="#444" textLength="17" lengthAdjust="spacingAndGlyphs">JSRS TEMPLATE</text></svg>
      <!-- Minimised WhatsApp window -->
      <svg viewBox="-20 -22 40 48"><path d="M-18-17.500h36v34.500h-36z" fill="#111a1f"/><path d="M-14-12h6M-14-8h8M-14-4h7M-14 0h8M-14 4h6M-14 8h8M-14 12h6" stroke="#3c494e"/><path d="M-16.500-12h1.500M-16.500-8h1.500M-16.500-4h1.500M-16.500 0h1.500M-16.500 4h1.500M-16.500 8h1.500M-16.500 12h1.500" stroke="#b98a80" stroke-width="1.600"/><path d="M-16-16h30" stroke="#59696e"/><path d="M-1-12h13M-1-8h9" stroke="#33464a" stroke-width="2"/><path d="M0-3h15v4H0z" fill="#0b5c52"/><rect x="6" y="6" width="12" height="12" rx="3" fill="#22d14c"/><use href="#wa" x="7.500" y="7.500" width="9" height="9"/></svg>
      <!-- Trash -->
      <svg viewBox="-20 -22 40 48"><path d="M-13-13L-9.500 14q9.500 5 19 0L13-13z" fill="url(#gTrash)"/><path d="M-8-8l2 22M0-7v22M8-8L6 14" stroke="#7d8183" stroke-width=".8"/><ellipse cy="-13" rx="13" ry="3.500" fill="#52585a" stroke="#c2c6c8"/><path d="M-11-13l3-4 4 1 4-2 5 2 4-1 3 4-5 3-6 1-7-1z" fill="#eceff0"/><path d="M-7-14l3 2M2-15l-2 3M7-14l2 1" stroke="#3e6da8" stroke-width="1.500"/><path d="M-3-15l1 2M5-12l1 1" stroke="#d46632" stroke-width="1.500"/></svg>
    </div>
  </footer>
</div>
<script>
  function fitLabels() {
    document.querySelectorAll('[data-w]').forEach(function (el) {
      el.style.letterSpacing = '0px';
      var width = el.getBoundingClientRect().width;
      el.style.letterSpacing = ((parseFloat(el.dataset.w) - width) / el.textContent.length) + 'px';
    });
  }
  window.addEventListener('load', function () {
    fitLabels();
    document.fonts.ready.then(fitLabels);
  });
</script>
</body>
</html>
